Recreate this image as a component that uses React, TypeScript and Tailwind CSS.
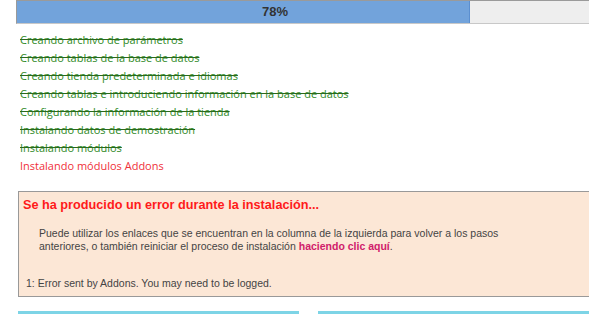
export default function App() {
  const steps = [
    "Creando archivo de parámetros",
    "Creando tablas de la base de datos",
    "Creando tienda predeterminada e idiomas",
    "Creando tablas e introduciendo información en la base de datos",
    "Configurando la información de la tienda",
    "Instalando datos de demostración",
    "Instalando módulos",
  ];
  return (
    <div className="w-[589px] h-[314px] overflow-hidden bg-white" style={{ fontFamily: '"Liberation Sans", Arial, sans-serif' }}>
      <div className="relative ml-[16px] w-[640px] h-[24px] flex bg-[#eeeeee] border-t border-t-[#9a9a9a] border-b border-b-[#c8c8c8] border-l border-l-[#9a9a9a]">
        <div className="w-[453px] h-full bg-[#72a3db] border-r border-r-[#5b8fd0]" />
        <div className="absolute left-0 top-0 w-[516px] h-full flex items-center justify-center text-[13px] font-bold text-[#333333]">78%</div>
      </div>
      <ul className="mt-[7px] ml-[20px] flex flex-col text-[11px] leading-[18px]" style={{ fontFamily: '"Open Sans", "Liberation Sans", sans-serif' }}>
        {steps.map((s) => (
          <li key={s} className="text-[#2f8a1f] line-through decoration-[#2a6a1c]">{s}</li>
        ))}
        <li className="text-[#f0303a]">Instalando módulos Addons</li>
      </ul>
      <div className="mt-[16px] ml-[18px] w-[600px] h-[106px] bg-[#fce7d6] border border-[#999999] pt-[3px]">
        <div className="pl-[4px] text-[12.7px] font-bold text-[#ff1a1a] leading-[20px]">Se ha producido un error durante la instalación...</div>
        <p className="mt-[12px] ml-[20px] w-[466px] text-[10.5px] leading-[13px] text-[#444444]">
          Puede utilizar los enlaces que se encuentran en la columna de la izquierda para volver a los pasos anteriores, o también reiniciar el proceso de instalación{" "}
          <span className="font-bold text-[#d0206a]">haciendo clic aquí</span>.
        </p>
        <div className="mt-[24px] pl-[7px] text-[10.5px] leading-[13px] text-[#444444]">1: Error sent by Addons. You may need to be logged.</div>
      </div>
      <div className="mt-[14px] ml-[18px] flex gap-[19px]">
        <div className="w-[281px] h-[4px] shrink-0 bg-[#7dd4e6]" />
        <div className="w-[300px] h-[4px] shrink-0 bg-[#7dd4e6]" />
      </div>
    </div>
  );
}
